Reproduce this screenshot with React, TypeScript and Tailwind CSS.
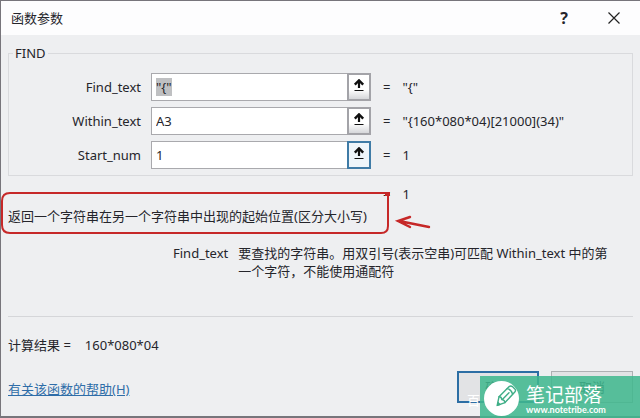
import { useState } from 'react';

const fields = [
  { id: 'Find_text', initial: '"{"', result: '"{"' },
  { id: 'Within_text', initial: 'A3', result: '"{160*080*04)[21000](34)"' },
  { id: 'Start_num', initial: '1', result: '1' },
];

function CollapseIcon() {
  return (
    <svg width="12" height="13" viewBox="0 0 12 13" fill="none" stroke="#111" aria-hidden="true">
      <path d="M6 9V2" strokeWidth="2.2" />
      <path d="M1.8 5.6 6 1.4l4.2 4.2" strokeWidth="2.4" />
      <path d="M1.5 11.5h9" strokeWidth="1" />
    </svg>
  );
}

function FieldRow({ field, active, selected }: { field: (typeof fields)[number]; active: boolean; selected: boolean }) {
  const [value, setValue] = useState(field.initial);

  return (
    <div className="flex items-center">
      <label htmlFor={field.id} className="w-33 shrink-0 text-right">
        {field.id}
      </label>
      <div className="relative ml-2.5 flex h-7 w-[220px] shrink-0 border border-[#a9a9ad] bg-white pl-1">
        <input
          id={field.id}
          value={value}
          onChange={(e) => setValue(e.target.value)}
          className={`h-[18px] self-center outline-none ${selected ? 'w-4 bg-[#bfc0c2]' : 'w-full min-w-0 bg-transparent'}`}
        />
        <button
          type="button"
          aria-label={`${field.id} ref`}
          className={`absolute -top-px -right-px flex h-7 w-6 justify-center border-2 pt-1 ${active ? 'border-[#3f7ba6] bg-[#eef5fa]' : 'border-[#a3a3a8] bg-linear-to-b from-white from-60% to-[#d6d7da]'}`}
        >
          <CollapseIcon />
        </button>
      </div>
      <span className="ml-3">=</span>
      <span className="ml-3">{field.result}</span>
    </div>
  );
}

function Watermark() {
  return (
    <div className="absolute right-0 -bottom-0.5 flex h-[42px] w-40 items-center bg-[#40b88f]/87 pt-0.5 pl-1 text-white">
      <svg width="35" height="35" viewBox="0 0 35 35" aria-hidden="true">
        <circle cx="17.5" cy="17.5" r="17.5" fill="#fff" />
        <g fill="none" stroke="#3fae87" strokeWidth="1.4" strokeLinejoin="round" strokeLinecap="round">
          <path d="M13.2 24.4 15 15.8 25.2 5.6q1.6-1.4 3.2 0l2.4 2.3q1.4 1.6 0 3.2L21 21.6Z" />
          <path d="M23.2 7.6q3.8.8 5.4 5.4" />
          <path d="m18.6 18.2 6.4-6.4M15 15.8q2.4-.2 2.8 2.8 3 .2 3.2 3" />
        </g>
        <path d="m13.9 20.6-1.2 4.6 4.6-1.5Z" fill="#3fae87" />
      </svg>
      <div className="ml-[7px] flex flex-col">
        <span className="font-['Noto_Sans_CJK_SC',sans-serif] text-[19px] leading-6">笔记部落</span>
        <span className="font-['Lato',sans-serif] text-[9px] leading-2 font-bold">www.notetribe.com</span>
      </div>
    </div>
  );
}

export default function App() {
  return (
    <div className="relative flex min-h-screen flex-col border-t border-b-2 border-l border-[#77757b] bg-[#eeeff1] font-['Noto_Sans','Noto_Sans_CJK_SC',sans-serif] text-[13px] leading-5 text-[#25252b]">
      <header className="flex h-[34px] items-center bg-[#fdfdfe] pr-5 pl-2.5">
        <h1 className="flex-1">函数参数</h1>
        <button type="button" className="text-base font-bold" aria-label="Help">?</button>
        <button type="button" aria-label="Close" className="ml-10">
          <svg width="12" height="12" viewBox="0 0 12 12" stroke="#222" strokeWidth="1.2" aria-hidden="true">
            <path d="m.5.5 11 11m0-11-11 11" />
          </svg>
        </button>
      </header>

      <main className="flex flex-1 flex-col px-[7px] pt-2">
        <fieldset className="border border-[#d9dadd] pb-1.5">
          <legend className="ml-1 px-0.5">FIND</legend>
          <div className="flex flex-col gap-1.5 pt-2.5">
            {fields.map((field, i) => (
              <FieldRow key={field.id} field={field} active={i === 2} selected={i === 0} />
            ))}
          </div>
        </fieldset>

        <div className="mt-2 flex gap-3 pl-[375px]">
          <span>=</span>
          <span>1</span>
        </div>
        <p className="mt-0.5">返回一个字符串在另一个字符串中出现的起始位置(区分大小写)</p>

        <dl className="mt-4.5 flex gap-2.5 pl-[165px] leading-[18px]">
          <dt>Find_text</dt>
          <dd className="max-w-[380px] flex-1">要查找的字符串。用双引号(表示空串)可匹配 Within_text 中的第一个字符，不能使用通配符</dd>
        </dl>

        <hr className="mt-9 border-[#d5d6d9]" />
        <div className="mt-4.5 flex gap-3.5">
          <span>计算结果 =</span>
          <span>160*080*04</span>
        </div>

        <footer className="mt-4 flex items-start justify-between">
          <a href="#help" className="mt-2 text-[#2e6da8] underline">有关该函数的帮助(H)</a>
          <div className="flex gap-3">
            <button type="button" className="h-8 w-[82px] border-2 border-[#2c6ea4] bg-[#e2e3e5]">确定</button>
            <button type="button" className="h-8 w-[82px] border border-[#aeb0b3] bg-[#e2e3e5]">取消</button>
          </div>
        </footer>
      </main>

      <span className="absolute right-40 bottom-1.5 text-white">百</span>

      {/* hand-drawn highlight and arrow */}
      <svg className="absolute top-[189px] left-0" width="434" height="48" viewBox="0 0 434 48" fill="none" stroke="#c62828" strokeWidth="2" aria-hidden="true">
        <path d="M389 3H9Q1 3 1 11v24q0 8 8 8H380q7 0 7-7V6M384 5h5" />
        <path d="m428 37-30-6m11-4-12 4 12 6" strokeLinecap="round" strokeWidth="2.4" />
      </svg>
      <Watermark />
    </div>
  );
}
